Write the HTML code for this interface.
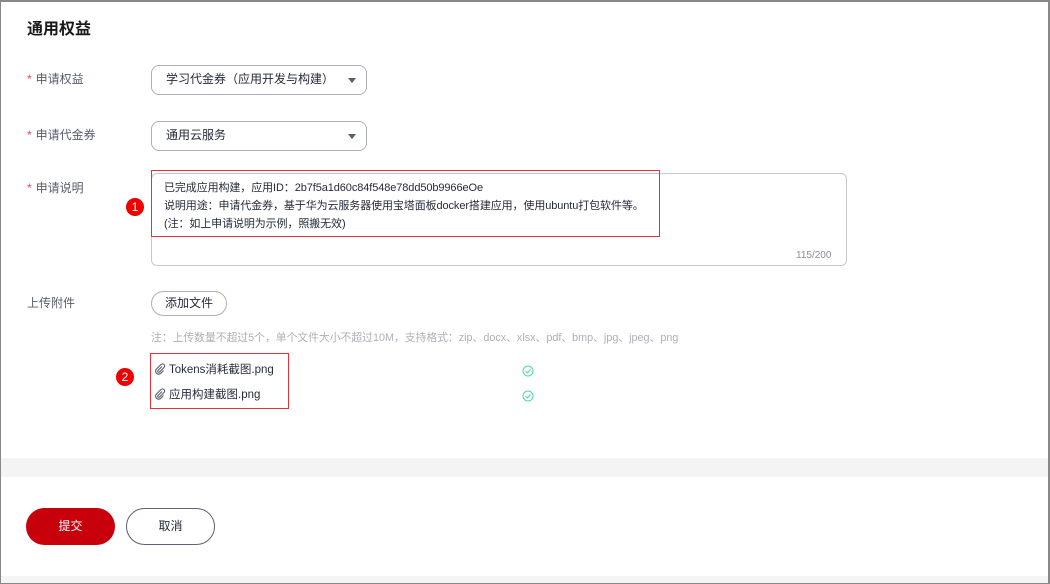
<!DOCTYPE html>
<html><head><meta charset="utf-8"><style>
*{margin:0;padding:0;box-sizing:border-box}
body{width:1050px;height:584px;background:#fff;font-family:"Liberation Sans","Noto Sans CJK SC",sans-serif;position:relative;overflow:hidden;color:#252b3a}
.a{position:absolute}
.frame{left:0;top:0;width:1050px;height:584px;border:1px solid #888;border-top-width:2px;border-right-width:2px;}
.lbl{font-size:12px;color:#575d6c;left:27px}
.lbl b{color:#e54545;font-weight:normal;margin-right:4px}
.sel{left:151px;width:216px;height:30px;border:1px solid #adb0b8;border-radius:8px;font-size:12px;padding:4px 14px;color:#252b3a}
.sel:after{content:"";position:absolute;right:10px;top:12px;border:4px solid transparent;border-top:5px solid #575d6c}
.txt{font-size:11px;line-height:18px}
.badge{width:18px;height:18px;border-radius:50%;background:#e00;color:#fff;font-size:12px;text-align:center;line-height:18px}
.red{border:1px solid #e8303a}
.clip{display:inline-block;vertical-align:-2px;margin-right:3px}
</style></head><body>
<div class="a" style="left:27px;top:15px;font-size:16px;font-weight:bold;color:#191919">通用权益</div>
<div class="a lbl" style="top:70px"><b>*</b>申请权益</div>
<div class="a sel" style="top:65px">学习代金券（应用开发与构建）</div>
<div class="a lbl" style="top:126px"><b>*</b>申请代金券</div>
<div class="a sel" style="top:121px">通用云服务</div>
<div class="a lbl" style="top:179px"><b>*</b>申请说明</div>
<div class="a" style="left:151px;top:173px;width:696px;height:93px;border:1px solid #c7c9ce;border-radius:6px"></div>
<div class="a red" style="left:151px;top:170px;width:509px;height:67px"></div>
<div class="a txt" style="left:164px;top:179px;letter-spacing:-0.1px">已完成应用构建，应用ID：2b7f5a1d60c84f548e78dd50b9966eOe<br>说明用途：申请代金券，基于华为云服务器使用宝塔面板docker搭建应用，使用ubuntu打包软件等。<br>(注：如上申请说明为示例，照搬无效)</div>
<div class="a badge" style="left:126px;top:198px">1</div>
<div class="a" style="left:796px;top:250px;font-size:10px;color:#8a8e99">115/200</div>
<div class="a lbl" style="top:294px">上传附件</div>
<div class="a" style="left:151px;top:291px;width:76px;height:25px;border:1px solid #adb0b8;border-radius:13px;font-size:12px;text-align:center;line-height:23px">添加文件</div>
<div class="a" style="left:151px;top:329px;font-size:10.8px;color:#adb0b8">注：上传数量不超过5个，单个文件大小不超过10M，支持格式：zip、docx、xlsx、pdf、bmp、jpg、jpeg、png</div>
<div class="a red" style="left:150px;top:353px;width:139px;height:56px"></div>
<div class="a badge" style="left:116px;top:368px">2</div>
<div class="a txt" style="left:154px;top:361px;font-size:11.5px"><svg class="clip" width="12" height="12" viewBox="0 0 12 12"><path d="M8 3.5L4 7.5a1 1 0 0 0 1.5 1.5L10 4.5a2 2 0 0 0-3-3L2.5 6a3 3 0 0 0 4.3 4.3L9.5 7.5" fill="none" stroke="#575d6c" stroke-width="1.1"/></svg>Tokens消耗截图.png</div>
<div class="a txt" style="left:154px;top:386px;font-size:11.5px"><svg class="clip" width="12" height="12" viewBox="0 0 12 12"><path d="M8 3.5L4 7.5a1 1 0 0 0 1.5 1.5L10 4.5a2 2 0 0 0-3-3L2.5 6a3 3 0 0 0 4.3 4.3L9.5 7.5" fill="none" stroke="#575d6c" stroke-width="1.1"/></svg>应用构建截图.png</div>
<svg class="a" style="left:522px;top:365px" width="12" height="12"><circle cx="6" cy="6" r="5" fill="none" stroke="#50d4ab" stroke-width="1"/><path d="M3.5 6l2 2 3-3.5" fill="none" stroke="#50d4ab"/></svg>
<svg class="a" style="left:522px;top:390px" width="12" height="12"><circle cx="6" cy="6" r="5" fill="none" stroke="#50d4ab" stroke-width="1"/><path d="M3.5 6l2 2 3-3.5" fill="none" stroke="#50d4ab"/></svg>
<div class="a" style="left:0;top:458px;width:1050px;height:19px;background:#f4f4f4"></div>
<div class="a" style="left:0;top:576px;width:1050px;height:8px;background:#f4f4f4"></div>
<div class="a" style="left:26px;top:508px;width:89px;height:37px;border-radius:19px;background:#c7000b;color:#fff;font-size:12px;text-align:center;line-height:37px">提交</div>
<div class="a" style="left:126px;top:508px;width:89px;height:37px;border-radius:19px;border:1px solid #5e6373;color:#252b3a;font-size:12px;text-align:center;line-height:35px">取消</div>
<div class="a frame"></div>
</body></html>
